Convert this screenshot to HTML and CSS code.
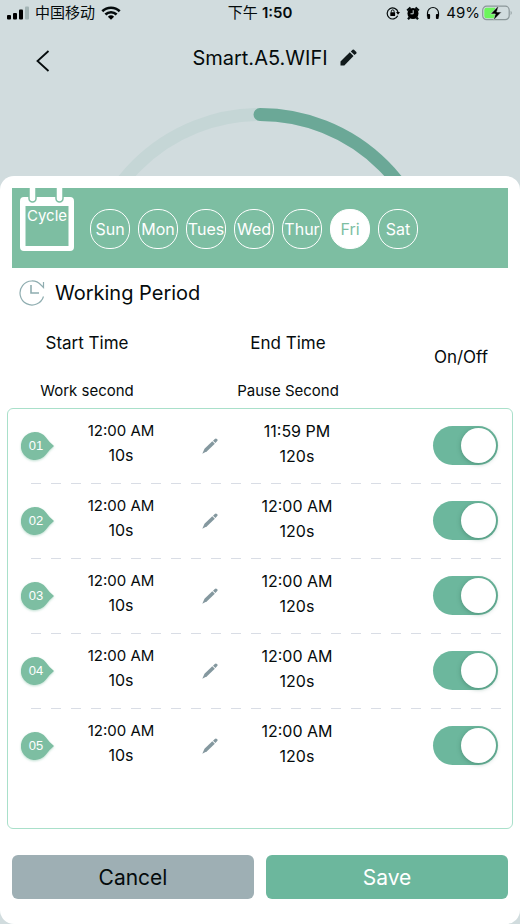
FILE: index.html
```html
<!DOCTYPE html>
<html lang="en">
<head>
<meta charset="utf-8">
<meta name="viewport" content="width=device-width, initial-scale=1">
<title>Smart.A5.WIFI</title>
<link rel="stylesheet" href="styles.css">
</head>
<body>
<svg width="0" height="0" class="defs" aria-hidden="true">
  <symbol id="pen" viewBox="0 0 16 16">
    <path d="M.3 15.700 2.500 10.800 10.300 3.300l2.500 2.500L5 13.200z"/>
    <path d="M11 2.700 12.800 1q1-1 2.200.1t0 2.200L13.400 5.100z"/>
  </symbol>
  <symbol id="tag" viewBox="0 0 33 28">
    <path d="M14 0a14 14 0 0 1 11 5.500Q28 10 33 14 28 18 25 22.500A14 14 0 1 1 14 0z"/>
  </symbol>
</svg>

<div class="status">
  <div class="status-left">
    <svg width="22" height="14" viewBox="0 0 22 14" aria-hidden="true">
      <rect x="0" y="9" width="4" height="4.500" rx="1"/>
      <rect x="6" y="7" width="4" height="6.500" rx="1"/>
      <rect x="12" y="3.500" width="4" height="10" rx="1"/>
      <rect x="18" y="0.500" width="4" height="13" rx="1" fill="#a3b4b5"/>
    </svg>
    <span>中国移动</span>
    <svg width="20" height="14" viewBox="0 0 20 14" aria-hidden="true">
      <g fill="none" stroke="#050b0c" stroke-width="2.600">
        <path d="M1.300 5.200a12.500 12.500 0 0 1 17.400 0"/>
        <path d="M4.400 8.500a8 8 0 0 1 11.200 0"/>
      </g>
      <path d="M10 13.800 6.900 10.800a4.500 4.500 0 0 1 6.200 0z"/>
    </svg>
  </div>
  <div class="status-time">下午 <b>1:50</b></div>
  <div class="status-right">
    <svg width="14" height="14" viewBox="0 0 14 14" aria-hidden="true">
      <path d="M11.700 9.800A5.500 5.500 0 1 1 12 6" fill="none" stroke="#050b0c" stroke-width="1.200"/>
      <path d="M10 6h4l-2 2.700z"/>
      <rect x="4.300" y="6.200" width="4.800" height="3.800" rx=".5"/>
      <path d="M5.300 6.500V5.300a1.400 1.400 0 0 1 2.800 0v1.200" fill="none" stroke="#050b0c"/>
    </svg>
    <svg width="14" height="14" viewBox="0 0 14 14" aria-hidden="true">
      <circle cx="7" cy="7.500" r="5.500"/>
      <path d="M1.200 4.500 4.500 1.500M12.800 4.500 9.500 1.500M3.500 11.500 2 13.200M10.500 11.500l1.500 1.700" stroke="#050b0c" stroke-width="2.200" fill="none"/>
      <path d="M7.200 4.200v3.600H4.500" stroke="#d1dcde" fill="none"/>
    </svg>
    <svg width="14" height="14" viewBox="0 0 14 14" aria-hidden="true">
      <path d="M1.500 10.500V7a5.500 5.500 0 0 1 11 0v3.500" fill="none" stroke="#050b0c" stroke-width="1.200"/>
      <rect x="1.300" y="8" width="2.800" height="5" rx="1"/>
      <rect x="9.900" y="8" width="2.800" height="5" rx="1"/>
    </svg>
    <span>49%</span>
    <svg class="battery" width="31" height="16" viewBox="0 0 31 16" aria-hidden="true">
      <rect x=".7" y="1.200" width="26.500" height="13.500" rx="4" fill="none" stroke="#8b9799" stroke-width="1.200"/>
      <path d="M28.700 5.800q2 2.200 0 4.400z" fill="#8b9799"/>
      <path d="M4.500 2.800H13v10.400H4.500a2.200 2.200 0 0 1-2.200-2.200V5a2.200 2.200 0 0 1 2.200-2.200z" fill="#6cf55c"/>
      <path d="M16.800.5 8.500 9h4.800l-2 6.500L19.500 7h-4.700z" stroke="#d1dcde" stroke-width=".6"/>
    </svg>
  </div>
</div>

<header class="header">
  <button class="icon-button back" aria-label="Back">
    <svg width="14" height="22" viewBox="0 0 14 22"><path d="M12.500 1 1.500 11l11 10" fill="none" stroke="#050b0c" stroke-width="1.800"/></svg>
  </button>
  <h1>Smart.A5.WIFI</h1>
  <button class="icon-button rename" aria-label="Rename">
    <svg width="17" height="17" viewBox="0 0 17 17" fill="#111a1b">
      <path d="M.5 16.500v-4L9.800 3.300l3.700 3.700L4.300 16.500z"/>
      <path d="M10.800 2.400 12.600.7q.7-.6 1.400 0l2.300 2.300q.6.700 0 1.400L14.500 6z"/>
    </svg>
  </button>
</header>

<svg class="dial" width="364" height="68" viewBox="0 0 364 68" fill="none" stroke-width="13" aria-hidden="true">
  <circle cx="182" cy="181" r="174.500" stroke="#c5d6d6"/>
  <path d="M182 6.500A174.500 174.500 0 0 1 356.500 181" stroke="#6ba897" stroke-linecap="round"/>
</svg>

<main class="sheet">
  <section class="cycle">
    <div class="calendar">
      <svg width="54" height="63" viewBox="0 0 54 63" aria-hidden="true">
        <path fill="#fff" fill-rule="evenodd" d="M4 9h46a4 4 0 0 1 4 4v46a4 4 0 0 1-4 4H4a4 4 0 0 1-4-4V13a4 4 0 0 1 4-4zM5.500 18v40h43V18z"/>
        <g fill="#fff" stroke="#7dbea2" stroke-width="1.500">
          <path d="M9 0v10.500a3.500 3.500 0 0 0 7 0V0"/>
          <path d="M36 0v10.500a3.500 3.500 0 0 0 7 0V0"/>
        </g>
      </svg>
      <span>Cycle</span>
    </div>
    <div class="days">
      <button>Sun</button>
      <button>Mon</button>
      <button>Tues</button>
      <button>Wed</button>
      <button>Thur</button>
      <button class="selected" aria-pressed="true">Fri</button>
      <button>Sat</button>
    </div>
  </section>

  <h2 class="period">
    <svg width="26" height="26" viewBox="0 0 26 26" fill="none" stroke="#8fadb0" aria-hidden="true">
      <path d="M24.500 16.500A12 12 0 1 1 22 5l2.500 2.500V2" stroke-width="1.200"/>
      <path d="M12 5v8h8" stroke-width="1.600"/>
    </svg>
    Working Period
  </h2>

  <table class="schedule">
    <thead>
      <tr>
        <th scope="col">Start Time<small>Work second</small></th>
        <th scope="col">End Time<small>Pause Second</small></th>
        <th scope="col" class="onoff">On/Off</th>
      </tr>
    </thead>
    <tbody>
      <tr>
        <td class="num"><svg width="33" height="28"><use href="#tag"/></svg><span>01</span></td>
        <td class="start">12:00 AM<br><span>10s</span></td>
        <td class="edit"><button class="icon-button" aria-label="Edit period 01"><svg width="16" height="16"><use href="#pen"/></svg></button></td>
        <td class="end">11:59 PM<br>120s</td>
        <td class="toggle"><input type="checkbox" checked aria-label="Period 01 on"></td>
      </tr>
      <tr>
        <td class="num"><svg width="33" height="28"><use href="#tag"/></svg><span>02</span></td>
        <td class="start">12:00 AM<br><span>10s</span></td>
        <td class="edit"><button class="icon-button" aria-label="Edit period 02"><svg width="16" height="16"><use href="#pen"/></svg></button></td>
        <td class="end">12:00 AM<br>120s</td>
        <td class="toggle"><input type="checkbox" checked aria-label="Period 02 on"></td>
      </tr>
      <tr>
        <td class="num"><svg width="33" height="28"><use href="#tag"/></svg><span>03</span></td>
        <td class="start">12:00 AM<br><span>10s</span></td>
        <td class="edit"><button class="icon-button" aria-label="Edit period 03"><svg width="16" height="16"><use href="#pen"/></svg></button></td>
        <td class="end">12:00 AM<br>120s</td>
        <td class="toggle"><input type="checkbox" checked aria-label="Period 03 on"></td>
      </tr>
      <tr>
        <td class="num"><svg width="33" height="28"><use href="#tag"/></svg><span>04</span></td>
        <td class="start">12:00 AM<br><span>10s</span></td>
        <td class="edit"><button class="icon-button" aria-label="Edit period 04"><svg width="16" height="16"><use href="#pen"/></svg></button></td>
        <td class="end">12:00 AM<br>120s</td>
        <td class="toggle"><input type="checkbox" checked aria-label="Period 04 on"></td>
      </tr>
      <tr>
        <td class="num"><svg width="33" height="28"><use href="#tag"/></svg><span>05</span></td>
        <td class="start">12:00 AM<br><span>10s</span></td>
        <td class="edit"><button class="icon-button" aria-label="Edit period 05"><svg width="16" height="16"><use href="#pen"/></svg></button></td>
        <td class="end">12:00 AM<br>120s</td>
        <td class="toggle"><input type="checkbox" checked aria-label="Period 05 on"></td>
      </tr>
    </tbody>
  </table>

  <div class="actions">
    <button class="cancel">Cancel</button>
    <button class="save">Save</button>
  </div>
</main>
</body>
</html>
```
FILE: styles.css
```css
* {
  box-sizing: border-box;
}

body {
  margin: 0;
  min-height: 100vh;
  display: flex;
  flex-direction: column;
  background: #d1dcde;
  color: #050b0c;
  font-family: Inter, "Noto Sans CJK SC", sans-serif;
  font-size: 16px;
}

button {
  font: inherit;
  color: inherit;
  border: 0;
  padding: 0;
  background: none;
}

svg {
  display: block;
  flex: none;
}

.defs {
  position: absolute;
}

/* Status bar */
.status {
  display: grid;
  grid-template-columns: 1fr auto 1fr;
  align-items: center;
  height: 26px;
  padding: 0 7px;
  font-size: 15px;
  line-height: 20px;
}

.status-left,
.status-right {
  display: flex;
  align-items: center;
  gap: 6px;
}

.status-right {
  justify-content: flex-end;
}

.status-right .battery {
  margin-left: -4px;
}

.status-time b {
  font-weight: 600;
}

/* Header */
.header {
  display: grid;
  grid-template-columns: 1fr auto 1fr;
  align-items: center;
  height: 82px;
  padding: 0 36px 18px;
}

.header h1 {
  margin: 0;
  font-size: 20px;
  line-height: 28px;
  font-weight: 400;
}

.back {
  justify-self: start;
  padding-top: 6px;
}

.rename {
  justify-self: start;
  padding: 0 0 2px 12px;
}

.dial {
  align-self: center;
  overflow: hidden;
}

/* Sheet */
.sheet {
  flex: 1;
  display: flex;
  flex-direction: column;
  padding: 12px 0 25px;
  border-radius: 14px;
  background: #fff;
}

.cycle {
  display: flex;
  align-items: flex-start;
  gap: 16px;
  height: 80px;
  margin: 0 12px;
  padding-left: 8px;
  background: #7dbea2;
  color: #fff;
}

.calendar {
  display: grid;
  justify-items: center;
}

.calendar > * {
  grid-area: 1 / 1;
}

.calendar span {
  padding-top: 18px;
  font-size: 15px;
  line-height: 20px;
}

.days {
  display: flex;
  gap: 8px;
  padding-top: 21px;
}

.days button {
  display: flex;
  align-items: center;
  justify-content: center;
  width: 40px;
  height: 40px;
  border: 1px solid #fff;
  border-radius: 19px;
}

.days .selected {
  background: #fff;
  color: #7dbea2;
}

.period {
  display: flex;
  align-items: center;
  gap: 10px;
  margin: 11px 19px 0;
  font-size: 20px;
  line-height: 28px;
  font-weight: 400;
}

/* Schedule */
.schedule,
.schedule thead,
.schedule tbody {
  display: block;
}

.schedule {
  margin: 24px 7px 0;
  text-align: center;
}

.schedule thead tr {
  display: grid;
  grid-template-columns: 160fr 242fr 104fr;
  height: 77px;
}

.schedule th {
  padding: 0;
  font-size: 17px;
  line-height: 24px;
  font-weight: 400;
}

.schedule small {
  display: block;
  padding-top: 24px;
  font-size: 15px;
}

.schedule .onoff {
  padding-top: 14px;
}

.schedule tbody {
  min-height: 421px;
  border: 1px solid #a9e0ca;
  border-radius: 6px;
}

.schedule tbody tr {
  display: grid;
  grid-template-columns: 60px 106fr 72fr 102fr 164fr;
  align-items: center;
  height: 75px;
  padding-bottom: 2px;
  background: repeating-linear-gradient(90deg, #d9dde5 0 10px, transparent 10px 20px) 23px 100% / calc(100% - 34px) 1px no-repeat;
}

.schedule tbody tr:last-child {
  background: none;
}

.schedule td {
  padding: 0;
  line-height: 25px;
}

.schedule .num {
  display: grid;
  align-items: center;
  padding-left: 13px;
  color: #fff;
  font-family: "Liberation Sans", Arial, sans-serif;
  font-size: 13px;
}

.num > * {
  grid-area: 1 / 1;
}

.num svg {
  fill: #7dbea2;
  filter: drop-shadow(0 1px 1px #7dbea280);
}

.num span {
  z-index: 1;
  width: 30px;
}

.schedule .start {
  padding-bottom: 6px;
}

.schedule .end {
  padding-bottom: 4px;
}

.start {
  font-size: 15px;
}

.start span {
  font-size: 16px;
}

.schedule .edit {
  display: grid;
  justify-items: center;
}

.edit svg {
  fill: #84989f;
}

.schedule .toggle {
  display: flex;
  justify-content: flex-end;
  padding-right: 14px;
}

.toggle input {
  appearance: none;
  display: flex;
  width: 65px;
  height: 39px;
  margin: 0;
  padding: 2px;
  border-radius: 20px;
  background: #6cb79d;
}

.toggle input::before {
  content: "";
  width: 35px;
  height: 35px;
  border-radius: 50%;
  background: #fff;
  box-shadow: 0 1px 4px #2f6b5680;
}

.toggle input:checked {
  justify-content: flex-end;
}

/* Actions */
.actions {
  display: grid;
  grid-template-columns: 1fr 1fr;
  gap: 12px;
  margin-top: auto;
  padding: 0 12px;
}

.actions button {
  height: 44px;
  border-radius: 6px;
  font-size: 21px;
}

.cancel {
  background: #9eafb4;
}

.actions .save {
  background: #6cb79d;
  color: #fff;
}
```
